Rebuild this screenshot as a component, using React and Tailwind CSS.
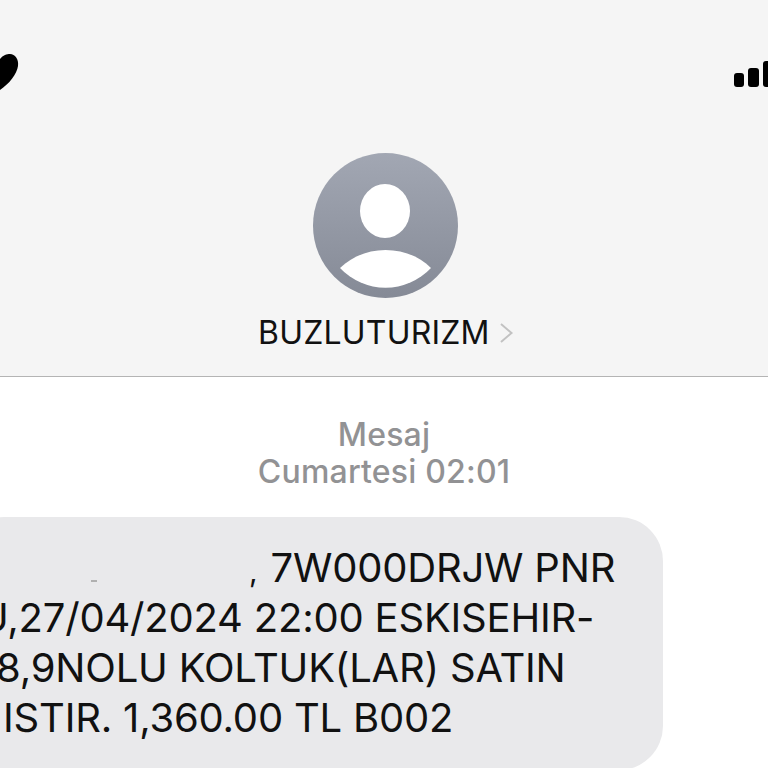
export default function App() {
  return (
    <div className="h-[768px] overflow-hidden bg-white font-['Inter','Liberation_Sans',sans-serif]">
      {/* Contact header */}
      <div className="flex h-[377px] flex-col border-b border-[#b4b4b4] bg-[#f5f5f5]">
        <div className="mt-[50px] flex h-[42px] justify-between">
          <svg className="h-[42px] w-[20px]" viewBox="0 0 20 42">
            <path d="M0 9C3 5 7 4 10 4C15 4 19 9 18 16C17 24 9 34 0 40Z" fill="#000" />
          </svg>
          <svg className="h-[42px] w-[34px]" viewBox="0 0 34 42">
            <rect x="0" y="23" width="10" height="14" rx="3" fill="#000" />
            <rect x="14" y="18" width="11" height="19" rx="3" fill="#000" />
            <rect x="29" y="11" width="10" height="26" rx="3" fill="#000" />
          </svg>
        </div>
        <svg className="mt-[61px] ml-[313px] h-[145px] w-[145px] shrink-0" viewBox="0 0 145 145">
          <defs>
            <linearGradient id="avatar" x1="0" y1="0" x2="0" y2="1">
              <stop offset="0" stopColor="#a2a7b3" />
              <stop offset="1" stopColor="#858a96" />
            </linearGradient>
          </defs>
          <circle cx="72.5" cy="72.5" r="72.5" fill="url(#avatar)" />
          <ellipse cx="72" cy="58" rx="25" ry="27" fill="#fff" />
          <path d="M27 115C40 103 55 97 72.5 97C90 97 106 103 118 115A62.3 62.3 0 0 1 27 115Z" fill="#fff" />
        </svg>
        <div className="mt-[16px] ml-[258px] flex items-center gap-[9px]">
          <span className="text-[32px] leading-[38px] tracking-[0.2px] text-[#111]">BUZLUTURIZM</span>
          <svg className="h-[24px] w-[15px]" viewBox="0 0 15 24" fill="none">
            <path d="M2 3L12.5 12L2 21" stroke="#c2c2c2" strokeWidth="2" />
          </svg>
        </div>
      </div>

      {/* Conversation */}
      <div className="pt-[39px] text-center text-[32px] font-medium leading-[37px] tracking-[0.2px] text-[#929294]">
        <div>Mesaj</div>
        <div>Cumartesi 02:01</div>
      </div>
      <div className="relative mt-[27px] ml-[-40px] h-[253px] w-[703px] rounded-[44px] bg-[#e9e9eb] pt-[26px] text-[40px] tracking-[-0.2px] whitespace-nowrap text-[#111]">
        <span className="absolute top-[63px] left-[131px] h-[2px] w-[6px] bg-[#b0b0b0]" />
        <div className="ml-[289px] h-[50px] leading-[50px]"><span className="mr-[2px] text-[30px] leading-none">,</span> 7W000DRJW PNR</div>
        <div className="ml-[19px] h-[50px] leading-[50px]">U,27/04/2024 22:00 ESKISEHIR-</div>
        <div className="ml-[36px] h-[50px] leading-[50px]">8,9NOLU KOLTUK(LAR) SATIN</div>
        <div className="ml-[43px] h-[50px] leading-[50px]">ISTIR. 1,360.00 TL B002</div>
      </div>
    </div>
  );
}
